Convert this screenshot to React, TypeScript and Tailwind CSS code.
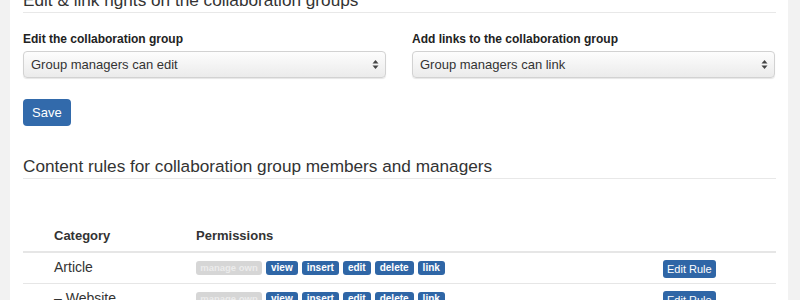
import React from "react";

const Arrows = () => (
  <svg width="7" height="11" viewBox="0 0 7 11" className="shrink-0">
    <path d="M3.5 1 L6.5 4.5 L0.5 4.5 Z" fill="#444" />
    <path d="M3.5 10 L6.5 6.5 L0.5 6.5 Z" fill="#444" />
  </svg>
);

const Select = ({ text }: { text: string }) => (
  <div className="flex h-[27px] items-center justify-between rounded-[4px] border border-[#d2d2d2] bg-gradient-to-b from-[#fdfdfd] to-[#ebebeb] pl-[7px] pr-[6px] text-[13px] text-[#333] shadow-[0_1px_1px_rgba(0,0,0,0.1)]">
    <span>{text}</span>
    <Arrows />
  </div>
);

const Badge = ({ text, off }: { text: string; off?: boolean }) => (
  <span
    className={`inline-flex h-[14px] items-center justify-center whitespace-nowrap rounded-[3px] px-[5px] font-bold leading-none ${
      off ? "w-[66px] bg-[#d6d6d6] text-[9.5px] text-[#ececec]" : "bg-[#2f66a6] text-[10px] text-white"
    }`}
  >
    {text}
  </span>
);

const perms = ["view", "insert", "edit", "delete", "link"];

const Row = ({ name }: { name: string }) => (
  <div className="flex h-[31px] items-center border-b border-[#e6e6e6] pb-[1px]">
    <div className="w-[173px] pl-[31px] text-[14px] text-[#333]">{name}</div>
    <div className="flex w-[467px] gap-[4px]">
      <Badge text="manage own" off />
      {perms.map((p) => (
        <Badge key={p} text={p} />
      ))}
    </div>
    <div>
      <span className="inline-flex h-[18px] items-center rounded-[3px] bg-[#2f66a6] px-[4px] text-[11px] text-white">
        Edit Rule
      </span>
    </div>
  </div>
);

export default function App() {
  return (
    <div
      className="flex h-[300px] w-[800px] overflow-hidden bg-[#f2f2f2]"
      style={{ fontFamily: '"Liberation Sans", Arial, sans-serif' }}
    >
      <div className="ml-[10px] w-[778px] bg-white">
        <div className="mt-[-12px] pl-[13px] pr-[12px]">
          <h2 className="border-b border-[#e8e8e8] text-[17.2px] leading-[24px] text-[#333]">
            Edit &amp; link rights on the collaboration groups
          </h2>
          <div className="mt-[18px] flex gap-[26px]">
            <div className="w-[363px]">
              <div className="mb-[4px] text-[12px] font-bold leading-[16px] text-[#222]">Edit the collaboration group</div>
              <Select text="Group managers can edit" />
            </div>
            <div className="w-[363px]">
              <div className="mb-[4px] text-[12px] font-bold leading-[16px] text-[#222]">Add links to the collaboration group</div>
              <Select text="Group managers can link" />
            </div>
          </div>
          <div className="mt-[21px]">
            <span className="inline-flex h-[27px] items-center rounded-[4px] bg-[#326aab] px-[9px] text-[13px] text-white">
              Save
            </span>
          </div>
          <h2 className="mt-[28px] border-b border-[#e8e8e8] text-[17.2px] leading-[24px] text-[#333]">
            Content rules for collaboration group members and managers
          </h2>
          <div className="mt-[49px]">
            <div className="flex h-[25px] items-end border-b-2 border-[#e6e6e6] pb-[6px] text-[13px] font-bold text-[#333]">
              <div className="w-[173px] pl-[31px]">Category</div>
              <div>Permissions</div>
            </div>
            <Row name="Article" />
            <Row name="– Website" />
          </div>
        </div>
      </div>
    </div>
  );
}
